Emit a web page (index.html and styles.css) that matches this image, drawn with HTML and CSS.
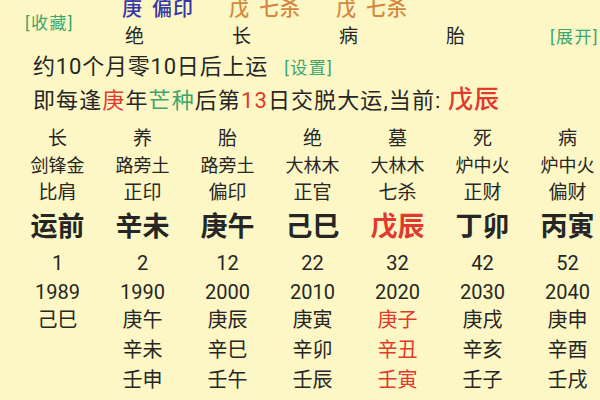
FILE: index.html
```html
<!DOCTYPE html>
<html lang="zh-CN">
<head>
  <meta charset="UTF-8">
  <title>大运</title>
  <meta name="viewport" content="width=device-width, initial-scale=1.0">
  <link rel="stylesheet" href="styles.css">
</head>
<body>
  <div class="page">
    <div class="top">
      <div class="link fav">[收藏]</div>
      <div class="gan blue">庚 偏印</div>
      <div class="gan orange">戊 七杀</div>
      <div class="gan orange">戊 七杀</div>
      <div class="gan"></div>
      <div></div>
      <div class="stage">绝</div>
      <div class="stage">长</div>
      <div class="stage">病</div>
      <div class="stage">胎</div>
      <div class="link more">[展开]</div>
    </div>

    <div class="line">约10个月零10日后上运 <span class="link set">[设置]</span></div>
    <div class="line wide">即每逢<span class="red">庚</span>年<span class="green">芒种</span>后第<span class="red">13</span>日交脱大运,当前: <span class="red cur">戊辰</span></div>

    <div class="yun">
      <div class="col">
        <div class="r1">长</div><div class="r2">剑锋金</div><div class="r3">比肩</div>
        <div class="r4">运前</div><div class="r5">1</div><div class="r6">1989</div>
        <div class="r7">己巳</div>
      </div>
      <div class="col">
        <div class="r1">养</div><div class="r2">路旁土</div><div class="r3">正印</div>
        <div class="r4">辛未</div><div class="r5">2</div><div class="r6">1990</div>
        <div class="r7">庚午</div><div class="r7">辛未</div><div class="r7">壬申</div>
      </div>
      <div class="col">
        <div class="r1">胎</div><div class="r2">路旁土</div><div class="r3">偏印</div>
        <div class="r4">庚午</div><div class="r5">12</div><div class="r6">2000</div>
        <div class="r7">庚辰</div><div class="r7">辛巳</div><div class="r7">壬午</div>
      </div>
      <div class="col">
        <div class="r1">绝</div><div class="r2">大林木</div><div class="r3">正官</div>
        <div class="r4">己巳</div><div class="r5">22</div><div class="r6">2010</div>
        <div class="r7">庚寅</div><div class="r7">辛卯</div><div class="r7">壬辰</div>
      </div>
      <div class="col">
        <div class="r1">墓</div><div class="r2">大林木</div><div class="r3">七杀</div>
        <div class="r4 red">戊辰</div><div class="r5">32</div><div class="r6">2020</div>
        <div class="r7 red">庚子</div><div class="r7 red">辛丑</div><div class="r7 red">壬寅</div>
      </div>
      <div class="col">
        <div class="r1">死</div><div class="r2">炉中火</div><div class="r3">正财</div>
        <div class="r4">丁卯</div><div class="r5">42</div><div class="r6">2030</div>
        <div class="r7">庚戌</div><div class="r7">辛亥</div><div class="r7">壬子</div>
      </div>
      <div class="col">
        <div class="r1">病</div><div class="r2">炉中火</div><div class="r3">偏财</div>
        <div class="r4">丙寅</div><div class="r5">52</div><div class="r6">2040</div>
        <div class="r7">庚申</div><div class="r7">辛酉</div><div class="r7">壬戌</div>
      </div>
    </div>
  </div>
</body>
</html>
```

FILE: styles.css
```css
html, body { margin: 0; padding: 0; background: #fcf7c5; }
body { font-family: Roboto, "Noto Sans CJK SC", sans-serif; color: #262626; width: 600px; height: 400px; overflow: hidden; }
.page { width: 600px; }

.top { display: grid; grid-template-columns: 97px 107px 107px 107px 1fr auto; grid-template-rows: 28px 28px; margin-top: -5px; padding-left: 25px; padding-right: 1px; }
.gan { font-size: 20px; line-height: 28px; font-weight: 500; letter-spacing: 1px; word-spacing: 3px; }
.stage { font-size: 19px; line-height: 28px; padding-left: 3px; }
.fav { grid-row: 1 / 3; align-self: center; margin-top: -4px; }
.more { line-height: 28px; white-space: nowrap; }
.link { color: #3ea56c; font-size: 17px; letter-spacing: 1.5px; }

.line { font-size: 22px; line-height: 32px; padding-left: 33px; letter-spacing: 0.8px; white-space: nowrap; }
.line.wide { letter-spacing: 1.1px; }
.set { margin-left: 10px; }
.cur { font-size: 25px; font-weight: 500; }

.blue { color: #3436a6; }
.orange { color: #d3873f; }
.red { color: #e2392f; }
.green { color: #3ea56c; }

.yun { display: grid; grid-template-columns: repeat(7, 85px); margin-top: 8px; margin-left: 15px; }
.col { display: flex; flex-direction: column; align-items: center; }
.col div { white-space: nowrap; }
.r1 { font-size: 19px; line-height: 28px; }
.r2 { font-size: 18px; line-height: 26px; }
.r3 { font-size: 19px; line-height: 28px; }
.r4 { font-size: 27px; line-height: 40px; font-weight: 700; }
.r5 { font-size: 20px; line-height: 32px; }
.r6 { font-size: 20px; line-height: 26px; }
.r7 { font-size: 20px; line-height: 30px; }
```
